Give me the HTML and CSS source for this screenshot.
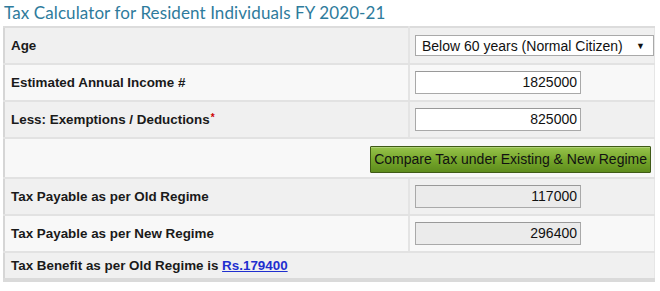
FILE: index.html
```html
<!DOCTYPE html>
<html>
<head>
<meta charset="utf-8">
<link rel="stylesheet" href="styles.css">
</head>
<body>
<h1 class="title">Tax Calculator for Resident Individuals FY 2020-21</h1>
<table class="calc">
  <tr class="odd">
    <td class="label">Age</td>
    <td class="field">
      <div class="select"><span>Below 60 years (Normal Citizen)</span><span class="arrow">▼</span></div>
    </td>
  </tr>
  <tr class="even">
    <td class="label">Estimated Annual Income #</td>
    <td class="field"><div class="input">1825000</div></td>
  </tr>
  <tr class="odd">
    <td class="label">Less: Exemptions / Deductions<span class="req">*</span></td>
    <td class="field"><div class="input">825000</div></td>
  </tr>
  <tr class="even btnrow">
    <td colspan="2" class="btncell"><button class="btn">Compare Tax under Existing &amp; New Regime</button></td>
  </tr>
  <tr class="odd">
    <td class="label">Tax Payable as per Old Regime</td>
    <td class="field"><div class="input ro">117000</div></td>
  </tr>
  <tr class="even">
    <td class="label">Tax Payable as per New Regime</td>
    <td class="field"><div class="input ro">296400</div></td>
  </tr>
  <tr class="odd last">
    <td colspan="2" class="label">Tax Benefit as per Old Regime is <a class="link" href="#">Rs.179400</a></td>
  </tr>
</table>
</body>
</html>
```
FILE: styles.css
```css
body {
  margin: 0;
  background: #fff;
  font-family: "Liberation Sans", Arial, sans-serif;
}
.title {
  margin: 0;
  padding: 3px 0 0 4px;
  height: 24px;
  box-sizing: border-box;
  font-family: "Lato", "Open Sans", sans-serif;
  font-weight: 400;
  font-size: 17px;
  line-height: 19px;
  color: #2e7b9c;
  letter-spacing: 0.1px;
}
.calc {
  margin: 2px 0 0 3px;
  width: 652px;
  border-collapse: collapse;
  border-top: 2px solid #dcdcdc;
  border-left: 2px solid #d6d6d6;
  border-right: 1px solid #e6e6e6;
  border-bottom: 4px solid #dadada;
}
.calc td {
  padding: 0;
  border-bottom: 2px solid #e2e2e2;
}
.odd { background: #f0f0f0; }
.even { background: #f8f8f8; }
tr { height: 37px; }
.btnrow { height: 40px; }
.last { height: 28px; }
.last td { border-bottom: none; }
.label {
  width: 397px;
  padding-left: 6px !important;
  font-weight: bold;
  font-size: 13.4px;
  color: #1a1a1a;
  border-right: 2px solid #e4e4e4;
}
.last .label { border-right: none; }
.req { color: #c00; font-size: 10px; vertical-align: top; margin-left: 1px; }
.field { padding-left: 5px !important; }
.input {
  width: 166px;
  height: 23px;
  box-sizing: border-box;
  border: 1px solid #a9a9a9;
  border-top-color: #999;
  background: #fff;
  text-align: right;
  font-size: 14px;
  line-height: 21px;
  padding-right: 3px;
  color: #111;
}
.input.ro { background: #ebebeb; }
.select {
  width: 239px;
  height: 21px;
  box-sizing: border-box;
  border: 1px solid #a9a9a9;
  background: #fff;
  display: flex;
  justify-content: space-between;
  align-items: center;
  font-size: 14px;
  padding: 0 8px 0 6px;
  color: #111;
}
.arrow { font-size: 9px; }
.btncell { text-align: right; padding-right: 3px !important; }
.btn {
  height: 27px;
  padding: 0 3px;
  font-family: "Liberation Sans", Arial, sans-serif;
  font-size: 14px;
  color: #111;
  border: 1px solid #3f5a16;
  background: linear-gradient(#97c34b, #74a52a 55%, #5e8c1d);
  border-radius: 1px;
  box-shadow: inset 0 1px 0 rgba(255,255,255,0.25);
  margin-top: 2px;
}
.link {
  color: #1f2fcf;
  text-decoration: underline;
}
```
